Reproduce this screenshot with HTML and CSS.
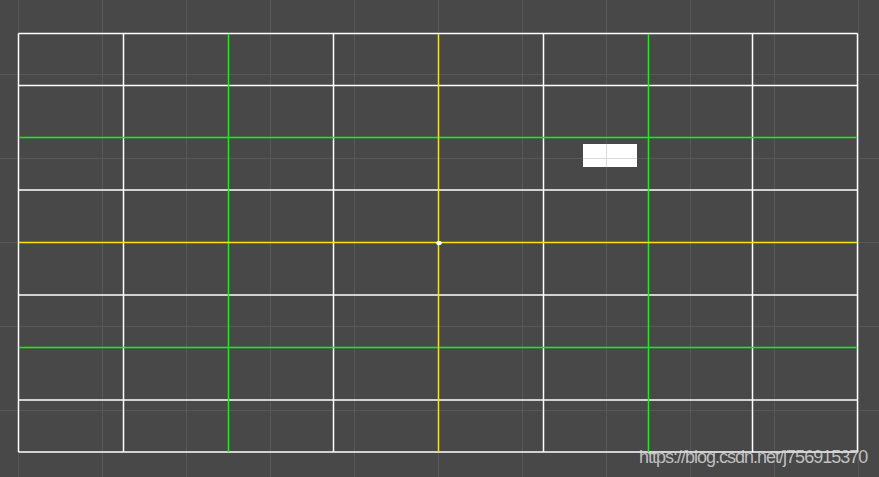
FILE: index.html
```html
<!DOCTYPE html>
<html lang="en">
<head>
  <meta charset="UTF-8" />
  <meta name="viewport" content="width=device-width, initial-scale=1.0" />
  <title>Grid</title>
  <link rel="stylesheet" href="styles.css">
</head>
<body>
  <div class="stage">
    <svg class="scene" width="879" height="477" viewBox="0 0 879 477">
      <!-- cell lines -->
      <g class="white">
        <line x1="18.5" y1="33.5" x2="857.5" y2="33.5"/>
        <line x1="18.5" y1="85.5" x2="857.5" y2="85.5"/>
        <line x1="18.5" y1="190" x2="857.5" y2="190"/>
        <line x1="18.5" y1="295" x2="857.5" y2="295"/>
        <line x1="18.5" y1="400" x2="857.5" y2="400"/>
        <line x1="18.5" y1="452" x2="857.5" y2="452"/>
        <line x1="18.5" y1="33.5" x2="18.5" y2="452"/>
        <line x1="123.5" y1="33.5" x2="123.5" y2="452"/>
        <line x1="333.5" y1="33.5" x2="333.5" y2="452"/>
        <line x1="543.5" y1="33.5" x2="543.5" y2="452"/>
        <line x1="752.5" y1="33.5" x2="752.5" y2="452"/>
        <line x1="857.5" y1="33.5" x2="857.5" y2="452"/>
      </g>
      <g class="green">
        <line x1="19" y1="137.5" x2="857" y2="137.5"/>
        <line x1="19" y1="347.5" x2="857" y2="347.5"/>
        <line x1="228.5" y1="34" x2="228.5" y2="452"/>
        <line x1="648.5" y1="34" x2="648.5" y2="452"/>
      </g>
      <g class="yellow">
        <line x1="19" y1="242.5" x2="857" y2="242.5"/>
        <line x1="438.5" y1="34" x2="438.5" y2="452"/>
      </g>
      <!-- selected block -->
      <rect class="block" x="583" y="144" width="54" height="23"/>
      <g class="block-grid">
        <line x1="606.5" y1="144" x2="606.5" y2="167"/>
        <line x1="583" y1="158.5" x2="637" y2="158.5"/>
      </g>
      <ellipse class="origin" cx="439" cy="243" rx="2.8" ry="2"/>
    </svg>
    <span class="watermark">https://blog.csdn.net/j756915370</span>
  </div>
</body>
</html>
```

FILE: styles.css
```css
body {
  margin: 0;
  background: #484848;
  font-family: 'Liberation Sans', Arial, sans-serif;
  overflow: hidden;
}
.stage {
  position: relative;
  width: 879px;
  height: 477px;
  background-color: #484848;
  background-image:
    linear-gradient(to right, #585858 1px, transparent 1px),
    linear-gradient(to bottom, #585858 1px, transparent 1px);
  background-size: 84px 84px;
  background-position: 18px 74px;
}
.scene {
  display: block;
}
.scene line {
  stroke-width: 1.5;
}
.white line { stroke: #ffffff; }
.green line { stroke: #00ff00; }
.yellow line { stroke: #ffe600; }
.block { fill: #ffffff; }
.block-grid line {
  stroke: #dadada;
  stroke-width: 1;
}
.origin { fill: #ffffff; }
.watermark {
  position: absolute;
  left: 639px;
  top: 447px;
  font-size: 18px;
  letter-spacing: -1px;
  color: rgba(215, 215, 215, 0.85);
  white-space: nowrap;
}
```
